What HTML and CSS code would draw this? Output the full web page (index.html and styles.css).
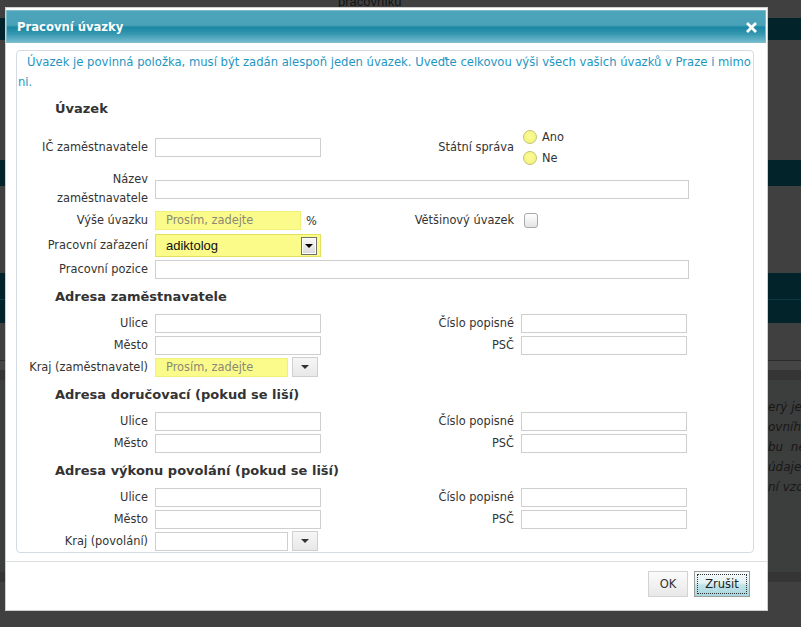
FILE: index.html
```html
<!DOCTYPE html>
<html lang="cs">
<head>
<meta charset="utf-8">
<title>Pracovní úvazky</title>
<link rel="stylesheet" href="styles.css">
</head>
<body>
<div class="page">
  <div class="page-top"><span class="page-top-text">pracovníků</span></div>
  <div class="bar bar-1"></div>
  <div class="gap gap-1"></div>
  <div class="bar bar-2"></div>
  <div class="gap gap-2"></div>
  <div class="bar bar-3"></div>
  <div class="gap gap-3"></div>
  <div class="gap gap-4"></div>
  <div class="band"></div>
  <div class="page-text">
    <div>erý je</div>
    <div>ovního</div>
    <div>bu&nbsp; ne</div>
    <div>údaje</div>
    <div>ní vzd</div>
  </div>
  <div class="band"></div>
</div>

<div class="dialog">
  <div class="dialog-title">
    <span class="dialog-title-text">Pracovní úvazky</span>
    <svg class="close" width="11" height="11" viewBox="0 0 11 11" aria-hidden="true">
      <path d="M2 2 L9 9 M9 2 L2 9" stroke="#ffffff" stroke-width="2.8" stroke-linecap="square" fill="none"/>
    </svg>
  </div>

  <div class="dialog-body">
    <div class="fieldset">
      <p class="info">Úvazek je povinná položka, musí být zadán alespoň jeden úvazek. Uveďte celkovou výši všech vašich úvazků v Praze i mimo ni.</p>

      <div class="heading">Úvazek</div>
      <div class="grid grid-main">
        <div class="label">IČ zaměstnavatele</div>
        <div class="input"></div>
        <div class="label">Státní správa</div>
        <div class="radios">
          <div class="radio-row"><span class="radio"></span><span class="radio-text">Ano</span></div>
          <div class="radio-row"><span class="radio"></span><span class="radio-text">Ne</span></div>
        </div>

        <div class="label">Název<br>zaměstnavatele</div>
        <div class="input wide"></div>

        <div class="label">Výše úvazku</div>
        <div class="pct">
          <div class="input yellow input-pct"><span class="placeholder">Prosím, zadejte</span></div>
          <span class="pct-sign">%</span>
        </div>
        <div class="label">Většinový úvazek</div>
        <div><span class="checkbox"></span></div>

        <div class="label">Pracovní zařazení</div>
        <div class="select">
          <span class="select-text">adiktolog</span>
          <span class="select-btn"><span class="tri tri-black"></span></span>
        </div>
        <div></div>
        <div></div>

        <div class="label">Pracovní pozice</div>
        <div class="input wide"></div>
      </div>

      <div class="heading">Adresa zaměstnavatele</div>
      <div class="grid grid-addr">
        <div class="label">Ulice</div>
        <div class="input"></div>
        <div class="label">Číslo popisné</div>
        <div class="input"></div>

        <div class="label">Město</div>
        <div class="input"></div>
        <div class="label">PSČ</div>
        <div class="input"></div>

        <div class="label">Kraj (zaměstnavatel)</div>
        <div class="combo">
          <div class="input yellow combo-input"><span class="placeholder">Prosím, zadejte</span></div>
          <span class="combo-btn"><span class="tri"></span></span>
        </div>
      </div>

      <div class="heading">Adresa doručovací (pokud se liší)</div>
      <div class="grid grid-addr">
        <div class="label">Ulice</div>
        <div class="input"></div>
        <div class="label">Číslo popisné</div>
        <div class="input"></div>

        <div class="label">Město</div>
        <div class="input"></div>
        <div class="label">PSČ</div>
        <div class="input"></div>
      </div>

      <div class="heading">Adresa výkonu povolání (pokud se liší)</div>
      <div class="grid grid-addr">
        <div class="label">Ulice</div>
        <div class="input"></div>
        <div class="label">Číslo popisné</div>
        <div class="input"></div>

        <div class="label">Město</div>
        <div class="input"></div>
        <div class="label">PSČ</div>
        <div class="input"></div>

        <div class="label">Kraj (povolání)</div>
        <div class="combo">
          <div class="input combo-input"></div>
          <span class="combo-btn"><span class="tri"></span></span>
        </div>
      </div>
    </div>
  </div>

  <div class="dialog-footer">
    <button class="btn btn-ok" type="button">OK</button>
    <button class="btn btn-cancel" type="button"><span class="btn-focus">Zrušit</span></button>
  </div>
</div>
</body>
</html>
```

FILE: styles.css
```css
* { box-sizing: border-box; }

html, body {
  margin: 0;
  padding: 0;
}

body {
  width: 801px;
  height: 627px;
  overflow: hidden;
  position: relative;
  background: #404040;
  font-family: "DejaVu Sans", Verdana, sans-serif;
  color: #333;
}

/* ---------- page behind the overlay ---------- */
.page-top {
  height: 18px;
  overflow: hidden;
  font-family: "Liberation Sans", Arial, sans-serif;
  font-size: 13px;
  color: #141414;
}
.page-top-text {
  display: block;
  margin-top: -5px;
  padding-left: 338px;
  line-height: 14px;
}
.bar { background: #022329; }
.bar-1 { height: 22px; }
.gap-1 { height: 120px; }
.bar-2 { height: 26px; }
.gap-2 { height: 87px; }
.bar-3 {
  height: 50px;
  background: linear-gradient(#022329 0, #022329 26px, #0d3a42 26px, #0d3a42 27px, #022329 27px);
}
.gap-3 { height: 38px; border-bottom: 1px solid #2c2c2c; }
.gap-4 { height: 9px; background: #454545; }
.band { height: 10px; background: #353535; }
.page-text {
  height: 192px;
  padding: 17px 0 0 768px;
  font-style: italic;
  font-size: 12px;
  line-height: 20px;
  color: #181818;
  background: #3c3d3d;
  white-space: nowrap;
}

/* ---------- dialog ---------- */
.dialog {
  position: absolute;
  left: 5px;
  top: 7px;
  width: 763px;
  height: 604px;
  background: #fff;
  border: 1px solid #cfcfcf;
  display: flex;
  flex-direction: column;
}

.dialog-title {
  margin: 2px 1px 0 0;
  height: 33px;
  border: 1px solid #7dbccb;
  background: linear-gradient(#4ca5bb 0, #49a2b8 46%, #1a87a3 52%, #3597b0 74%, #72bbcd 100%);
  display: flex;
  align-items: center;
  justify-content: space-between;
  padding: 1px 8px 0 10px;
  color: #fff;
}
.dialog-title-text {
  font-weight: bold;
  font-size: 11.6px;
}
.close { display: block; }

.dialog-body {
  padding: 7px 13px 0 10px;
}

.fieldset {
  border: 1px solid #d3dce4;
  border-radius: 4px;
  padding-top: 1px;
  height: 503px;
}

.info {
  margin: 0;
  padding-left: 1px;
  text-indent: 9px;
  font-size: 11.6px;
  line-height: 20px;
  color: #1e96c1;
}

.heading {
  padding: 4px 0 2px 38px;
  line-height: 26px;
  font-size: 13px;
  font-weight: bold;
  color: #333;
}

.grid {
  display: grid;
  grid-template-columns: 131px 166px 186px 166px;
  column-gap: 7px;
  align-items: center;
}
.grid-main { grid-template-rows: 46px 38px 25px 25px 22px; }
.grid-addr { grid-auto-rows: 22px; }

.label {
  text-align: right;
  font-size: 11.4px;
  line-height: 19px;
  color: #333;
  white-space: nowrap;
}

.input {
  height: 19px;
  border: 1px solid #cfcfcf;
  background: #fff;
}
.wide { grid-column: 2 / 5; width: 534px; }

.yellow {
  background: #fbfb8c;
  border-color: #f1f17a;
}
.placeholder {
  display: block;
  padding-left: 10px;
  font-size: 11.4px;
  line-height: 17px;
  color: #8a8a74;
}

/* radios */
.radios {
  display: flex;
  flex-direction: column;
  padding-left: 2px;
}
.radio-row {
  height: 21px;
  display: flex;
  align-items: center;
  gap: 5px;
}
.radio {
  width: 14px;
  height: 14px;
  border-radius: 50%;
  border: 1px solid #c3c377;
  background: radial-gradient(circle at 50% 40%, #fbfb98 0, #f1f176 100%);
}
.radio-text { font-size: 11.4px; color: #333; }

/* percent */
.pct {
  display: flex;
  align-items: center;
  gap: 5px;
}
.input-pct { width: 146px; }
.pct-sign { font-size: 11.4px; color: #333; }

/* checkbox */
.checkbox {
  display: block;
  margin-left: 3px;
  width: 14px;
  height: 15px;
  border: 1px solid #a9a9a9;
  border-radius: 3px;
  background: linear-gradient(#ffffff, #e4e4e4);
}

/* select */
.select {
  height: 23px;
  width: 166px;
  border: 1px solid #e2e25c;
  background: #fbfb8a;
  display: flex;
  align-items: center;
  justify-content: space-between;
  padding: 0 3px 0 10px;
}
.select-text {
  font-family: "Liberation Sans", Arial, sans-serif;
  font-size: 13px;
  color: #111;
}
.select-btn {
  width: 16px;
  height: 18px;
  border: 1px solid #6f6f6f;
  box-shadow: inset 0 0 0 1px #ffffff;
  background: linear-gradient(#fafafa, #d9d9d9);
  display: flex;
  align-items: center;
  justify-content: center;
}
.tri {
  width: 0;
  height: 0;
  border-left: 4px solid transparent;
  border-right: 4px solid transparent;
  border-top: 4px solid #333;
}
.tri-black { border-top-color: #000; }

/* combo */
.combo {
  display: flex;
  align-items: center;
  gap: 4px;
  width: 163px;
}
.combo-input { width: 133px; }
.combo-btn {
  width: 26px;
  height: 20px;
  border: 1px solid #cfcfcf;
  background: linear-gradient(#f6f6f6, #e8e8e8);
  display: flex;
  align-items: center;
  justify-content: center;
}

/* footer */
.dialog-footer {
  margin-top: 8px;
  border-top: 1px solid #dcdcdc;
  padding: 9px 17px 0 0;
  display: flex;
  justify-content: flex-end;
  gap: 6px;
}
.btn {
  height: 26px;
  margin: 0;
  padding: 0;
  font-family: "DejaVu Sans", Verdana, sans-serif;
  font-size: 11.5px;
  color: #333;
  cursor: default;
}
.btn-ok {
  width: 40px;
  border: 1px solid #d3d3d3;
  background: linear-gradient(#fbfbfb, #e8e8e8);
}
.btn-cancel {
  width: 56px;
  border: 1px solid #9c9c9c;
  background: linear-gradient(#f6fbfc 0, #e3f2f4 45%, #c1e3e9 55%, #a8d7df 100%);
  padding: 2px;
  color: #222;
}
.btn-focus {
  display: flex;
  align-items: center;
  justify-content: center;
  height: 100%;
  border: 1px dotted #333;
}
```
